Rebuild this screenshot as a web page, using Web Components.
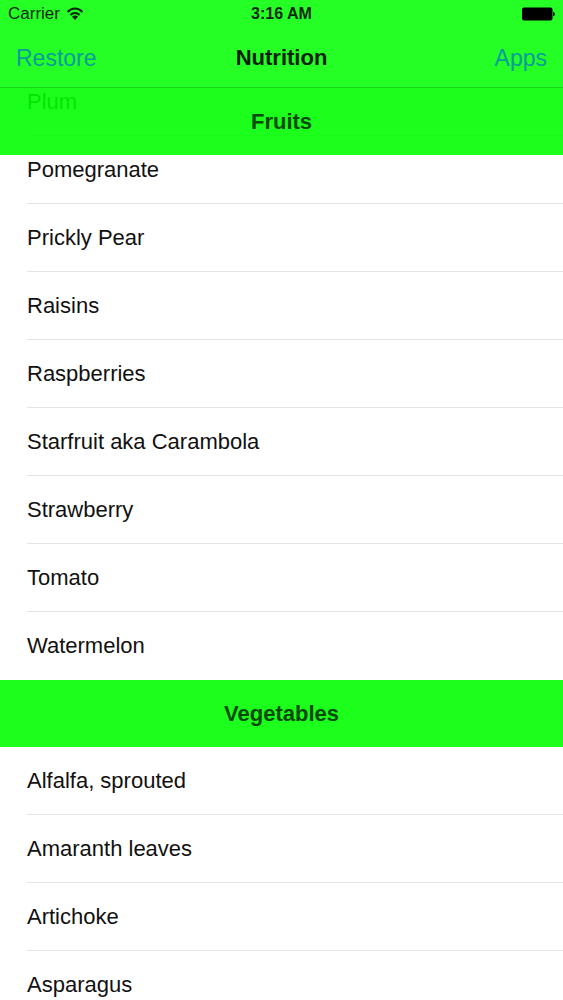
<!DOCTYPE html>
<html lang="en">
<head>
<meta charset="utf-8">
<meta name="viewport" content="width=device-width, initial-scale=1">
<title>Nutrition</title>
<style>
	body {
		margin: 0;
		background: #fff;
		color: #111;
		font: 22px/28px "Liberation Sans", Arial, sans-serif;
	}
</style>
</head>
<body>
<nutrition-app></nutrition-app>

<script>
class StatusBar extends HTMLElement {
	constructor() {
		super();
		this.attachShadow({ mode: 'open' });
	}

	connectedCallback() {
		this.shadowRoot.innerHTML = `
			<style>
			:host {
				display: grid;
				grid-template-columns: 1fr auto 1fr;
				align-items: center;
				height: 28px;
				padding: 0 8px;
				font-size: 16px;
				line-height: 28px;
				color: #062806;
			}

			.carrier {
				display: flex;
				align-items: center;
				gap: 7px;
				font-size: 17px;
			}

			.battery {
				justify-self: end;
			}

			svg {
				display: block;
			}
			</style>
			<span class="carrier">
				<span>${this.getAttribute('carrier')}</span>
				<svg width="16" height="14" viewBox="0 0 16 14" fill="none" stroke="#062806" stroke-width="2" aria-label="Wi-Fi">
					<path d="M.7 5C4.700 .4 11.300 .4 15.300 5" />
					<path d="M3.400 8C6 5.200 10 5.200 12.600 8" />
					<path d="M8 13L4.900 9.800C6.600 8.100 9.400 8.100 11.100 9.800Z" fill="#062806" stroke="none" />
				</svg>
			</span>
			<b>${this.getAttribute('time')}</b>
			<svg class="battery" width="33" height="14" viewBox="0 0 33 14" fill="#000" aria-label="Battery">
				<rect x="0" y="0.5" width="30.5" height="13" rx="2" />
				<path d="M31.2 4.8C33.4 5.2 33.4 8.8 31.2 9.2Z" />
			</svg>
		`;
	}
}

class NavBar extends HTMLElement {
	constructor() {
		super();
		this.attachShadow({ mode: 'open' });
	}

	connectedCallback() {
		this.shadowRoot.innerHTML = `
			<style>
			:host {
				display: block;
				box-sizing: border-box;
				height: 88px;
				background: rgba(0, 255, 0, 0.85);
				border-bottom: 1px solid #18d418;
			}

			.bar {
				display: grid;
				grid-template-columns: 1fr auto 1fr;
				align-items: center;
				height: 59px;
				padding: 0 16px;
			}

			h1 {
				margin: 0;
				font-size: 22px;
				color: #042004;
			}

			::slotted(button) {
				justify-self: start;
				padding: 0;
				border: 0;
				background: none;
				font: inherit;
				font-size: 23px;
				color: #069c9c;
				cursor: pointer;
			}

			::slotted(button[slot='right']) {
				justify-self: end;
			}
			</style>
			<slot name="status"></slot>
			<div class="bar">
				<slot name="left"></slot>
				<h1><slot></slot></h1>
				<slot name="right"></slot>
			</div>
		`;
	}
}

class FoodSection extends HTMLElement {
	constructor() {
		super();
		this.attachShadow({ mode: 'open' });
	}

	connectedCallback() {
		this.shadowRoot.innerHTML = `
			<style>
			:host {
				display: block;
			}

			h2 {
				box-sizing: border-box;
				margin: 0;
				padding: 20px 16px;
				height: 67px;
				background: rgba(0, 255, 0, 0.89);
				font-size: 22px;
				text-align: center;
				color: #064806;
			}

			/* header stuck under the nav bar while its rows scroll below it */
			:host([pinned]) h2 {
				position: absolute;
				top: 88px;
				left: 0;
				right: 0;
			}

			ul {
				margin: 0;
				padding: 0 0 0 27px;
				list-style: none;
			}
			</style>
			<h2>${this.getAttribute('heading')}</h2>
			<ul><slot></slot></ul>
		`;
	}
}

class FoodRow extends HTMLElement {
	constructor() {
		super();
		this.attachShadow({ mode: 'open' });
	}

	connectedCallback() {
		this.setAttribute('role', 'listitem');
		this.shadowRoot.innerHTML = `
			<style>
			:host {
				display: flex;
				align-items: center;
				box-sizing: border-box;
				height: 68px;
				border-bottom: 1px solid #e4e4e4;
			}

			:host(:last-child) {
				border-bottom-color: transparent;
			}
			</style>
			<slot></slot>
		`;
	}
}

class NutritionApp extends HTMLElement {
	constructor() {
		super();
		this.attachShadow({ mode: 'open' });
	}

	connectedCallback() {
		this.shadowRoot.innerHTML = `
			<style>
			:host {
				display: block;
				position: relative;
				height: 100vh;
				overflow: hidden;
			}

			nav-bar {
				position: absolute;
				top: 0;
				left: 0;
				right: 0;
				z-index: 1;
			}

			main {
				padding-top: 68px;
			}
			</style>
			<nav-bar>
				<status-bar slot="status" carrier="Carrier" time="3:16 AM"></status-bar>
				<button slot="left" type="button">Restore</button>
				Nutrition
				<button slot="right" type="button">Apps</button>
			</nav-bar>
			<main>
				<food-section heading="Fruits" pinned>
					<food-row>Plum</food-row>
					<food-row>Pomegranate</food-row>
					<food-row>Prickly Pear</food-row>
					<food-row>Raisins</food-row>
					<food-row>Raspberries</food-row>
					<food-row>Starfruit aka Carambola</food-row>
					<food-row>Strawberry</food-row>
					<food-row>Tomato</food-row>
					<food-row>Watermelon</food-row>
				</food-section>
				<food-section heading="Vegetables">
					<food-row>Alfalfa, sprouted</food-row>
					<food-row>Amaranth leaves</food-row>
					<food-row>Artichoke</food-row>
					<food-row>Asparagus</food-row>
				</food-section>
			</main>
		`;
	}
}

customElements.define('status-bar', StatusBar);
customElements.define('nav-bar', NavBar);
customElements.define('food-section', FoodSection);
customElements.define('food-row', FoodRow);
customElements.define('nutrition-app', NutritionApp);
</script>
</body>
</html>
